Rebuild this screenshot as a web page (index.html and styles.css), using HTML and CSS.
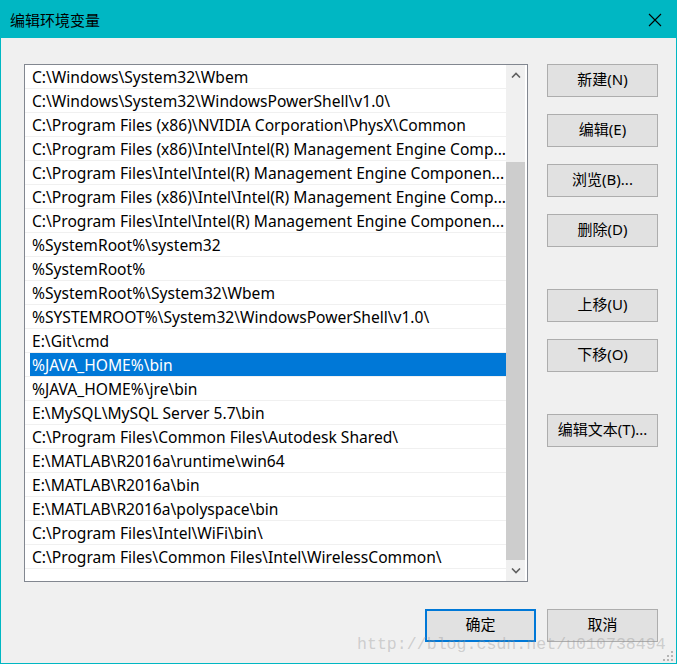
FILE: index.html
```html
<!DOCTYPE html>
<html lang="zh-CN">
<head>
<meta charset="utf-8">
<title>编辑环境变量</title>
<link rel="stylesheet" href="styles.css">
</head>
<body>
<div class="window">
  <div class="titlebar">
    <span class="title">编辑环境变量</span>
    <svg class="close" width="14" height="14" viewBox="0 0 14 14"><path d="M1 1L13 13M13 1L1 13" stroke="#000" stroke-width="1.1" fill="none"/></svg>
  </div>
  <div class="body">
    <div class="main">
      <div class="list">
        <div class="rows">
          <div class="row">C:\Windows\System32\Wbem</div>
          <div class="row">C:\Windows\System32\WindowsPowerShell\v1.0\</div>
          <div class="row">C:\Program Files (x86)\NVIDIA Corporation\PhysX\Common</div>
          <div class="row">C:\Program Files (x86)\Intel\Intel(R) Management Engine Comp...</div>
          <div class="row">C:\Program Files\Intel\Intel(R) Management Engine Componen...</div>
          <div class="row">C:\Program Files (x86)\Intel\Intel(R) Management Engine Comp...</div>
          <div class="row">C:\Program Files\Intel\Intel(R) Management Engine Componen...</div>
          <div class="row">%SystemRoot%\system32</div>
          <div class="row">%SystemRoot%</div>
          <div class="row">%SystemRoot%\System32\Wbem</div>
          <div class="row">%SYSTEMROOT%\System32\WindowsPowerShell\v1.0\</div>
          <div class="row">E:\Git\cmd</div>
          <div class="row selected">%JAVA_HOME%\bin</div>
          <div class="row">%JAVA_HOME%\jre\bin</div>
          <div class="row">E:\MySQL\MySQL Server 5.7\bin</div>
          <div class="row">C:\Program Files\Common Files\Autodesk Shared\</div>
          <div class="row">E:\MATLAB\R2016a\runtime\win64</div>
          <div class="row">E:\MATLAB\R2016a\bin</div>
          <div class="row">E:\MATLAB\R2016a\polyspace\bin</div>
          <div class="row">C:\Program Files\Intel\WiFi\bin\</div>
          <div class="row">C:\Program Files\Common Files\Intel\WirelessCommon\</div>
        </div>
        <div class="scrollbar">
          <div class="arrow up"><svg width="10" height="6" viewBox="0 0 10 6"><path d="M1 5.5L5 1.5L9 5.5" stroke="#606060" stroke-width="1.6" fill="none"/></svg></div>
          <div class="track"><div class="thumb"></div></div>
          <div class="arrow down"><svg width="10" height="6" viewBox="0 0 10 6"><path d="M1 0.5L5 4.5L9 0.5" stroke="#606060" stroke-width="1.6" fill="none"/></svg></div>
        </div>
      </div>
      <div class="side">
        <button class="btn">新建(N)</button>
        <button class="btn">编辑(E)</button>
        <button class="btn">浏览(B)...</button>
        <button class="btn">删除(D)</button>
        <button class="btn group">上移(U)</button>
        <button class="btn">下移(O)</button>
        <button class="btn group">编辑文本(T)...</button>
      </div>
    </div>
    <div class="footer">
      <button class="btn default">确定</button>
      <button class="btn">取消</button>
    </div>
  </div>
  <div class="watermark">http://blog.csdn.net/u010738494</div>
  <svg class="grip" width="12" height="12" viewBox="0 0 12 12">
    <rect x="9" y="1" width="2" height="2" fill="#b4b4b4"/>
    <rect x="5" y="5" width="2" height="2" fill="#b4b4b4"/>
    <rect x="9" y="5" width="2" height="2" fill="#b4b4b4"/>
    <rect x="1" y="9" width="2" height="2" fill="#b4b4b4"/>
    <rect x="5" y="9" width="2" height="2" fill="#b4b4b4"/>
    <rect x="9" y="9" width="2" height="2" fill="#b4b4b4"/>
  </svg>
</div>
</body>
</html>
```

FILE: styles.css
```css
* { box-sizing: border-box; }
html, body { margin: 0; padding: 0; background: #f0f0f0; }
body {
  font-family: "Noto Sans", "Noto Sans CJK SC", sans-serif;
  font-size: 15px;
  color: #000;
}
.window {
  position: relative;
  width: 677px;
  height: 664px;
  border: 1px solid #00b7c3;
  background: #f0f0f0;
  overflow: hidden;
}
.titlebar {
  height: 37px;
  background: #00b7c3;
  display: flex;
  align-items: center;
  justify-content: space-between;
  padding: 0 14px 0 9px;
}
.title {
  font-family: "Noto Sans CJK SC", sans-serif;
  font-size: 15px;
  line-height: 20px;
  margin-top: 1px;
}
.close { display: block; }
.body {
  padding: 26px 18px 0 23px;
}
.main {
  display: flex;
  gap: 19px;
}
.list {
  width: 505px;
  height: 518px;
  border: 1px solid #828790;
  background: #fff;
  display: flex;
}
.rows {
  width: 481px;
}
.row {
  height: 24px;
  line-height: 25px;
  border-bottom: 1px solid #f0f0f0;
  padding-left: 7px;
  white-space: nowrap;
  overflow: hidden;
  font-size: 15.6px;
}
.row.selected {
  background: linear-gradient(to right, #fff 5px, #0078d7 5px);
  color: #fff;
}
.scrollbar {
  width: 19px;
  height: 516px;
  background: #f0f0f0;
  display: flex;
  flex-direction: column;
}
.arrow {
  display: flex;
  align-items: center;
  justify-content: center;
}
.arrow.up { height: 17px; padding-top: 3px; }
.arrow.down { height: 21px; }
.track {
  flex: 1;
  padding-top: 80px;
}
.thumb {
  height: 398px;
  background: #cdcdcd;
}
.side {
  width: 111px;
  display: flex;
  flex-direction: column;
  gap: 17px;
}
.btn {
  width: 111px;
  height: 33px;
  border: 1px solid #adadad;
  background: #e1e1e1;
  font-family: "Noto Sans", "Noto Sans CJK SC", sans-serif;
  font-size: 15px;
  color: #000;
  padding: 0 0 3px 0;
  margin: 0;
  line-height: 20px;
}
.btn.group { margin-top: 25px; }
.btn.default { border: 2px solid #0078d7; }
.footer {
  display: flex;
  justify-content: flex-end;
  gap: 11px;
  margin-top: 27px;
}
.watermark {
  position: absolute;
  left: 356px;
  top: 634px;
  font-family: "Liberation Mono", monospace;
  font-size: 16.6px;
  line-height: 20px;
  color: rgba(150, 150, 150, 0.4);
  white-space: nowrap;
  pointer-events: none;
}
.grip {
  position: absolute;
  right: 2px;
  bottom: 1px;
}
```
